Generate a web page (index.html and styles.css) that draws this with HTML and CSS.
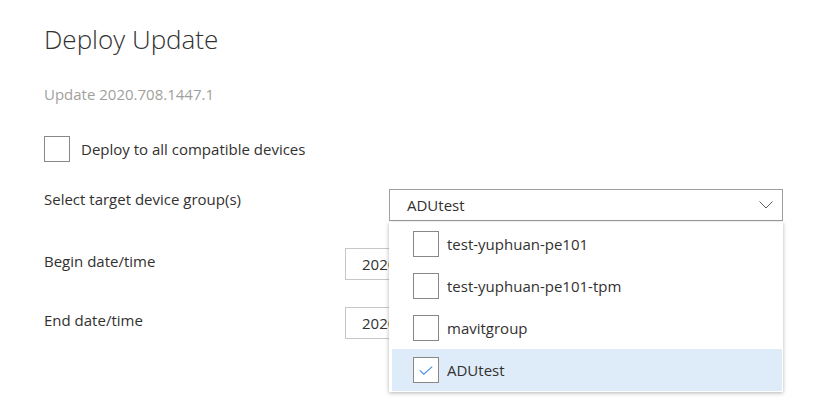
FILE: index.html
```html
<!DOCTYPE html>
<html>
<head>
<meta charset="utf-8">
<link rel="stylesheet" href="styles.css">
</head>
<body>
<div class="page">
  <h1 class="title">Deploy Update</h1>
  <div class="subtitle">Update 2020.708.1447.1</div>
  <label class="check-row">
    <span class="box"></span>
    <span class="check-label">Deploy to all compatible devices</span>
  </label>
  <div class="row row-select">
    <div class="label label-wide">Select target device group(s)</div>
    <div class="select-wrap">
      <div class="select">
        <span>ADUtest</span>
        <svg class="chev" width="14" height="8" viewBox="0 0 14 8"><path d="M0.5 0.5 L7 7 L13.5 0.5" fill="none" stroke="#605e5c" stroke-width="1"/></svg>
      </div>
      <div class="menu">
        <div class="opt"><span class="box"></span><span>test-yuphuan-pe101</span></div>
        <div class="opt"><span class="box"></span><span>test-yuphuan-pe101-tpm</span></div>
        <div class="opt"><span class="box"></span><span>mavitgroup</span></div>
        <div class="opt sel"><span class="box"><svg width="14" height="9" viewBox="0 0 14 9"><path d="M0.8 4.3 L4.8 8.2 L13.2 0.6" fill="none" stroke="#4a8fe0" stroke-width="1.1"/></svg></span><span>ADUtest</span></div>
      </div>
    </div>
  </div>
  <div class="row row-date">
    <div class="label">Begin date/time</div>
    <div class="date">2020-07-08</div>
  </div>
  <div class="row row-date">
    <div class="label">End date/time</div>
    <div class="date">2020-07-08</div>
  </div>
</div>
</body>
</html>
```
FILE: styles.css
```css
* { box-sizing: border-box; }
html, body { margin: 0; background: #fff; }
body { font-family: "Open Sans", "Noto Sans", sans-serif; color: #323130; width: 814px; height: 407px; overflow: hidden; }
.page { padding: 21px 0 0 44px; }
.title { margin: 0; font-weight: 300; font-size: 26px; line-height: 36px; color: #323130; }
.subtitle { margin-top: 27px; font-size: 15px; line-height: 20px; color: #a19f9d; }
.check-row { display: flex; align-items: center; gap: 11px; margin-top: 32px; height: 26px; }
.box { width: 26px; height: 26px; border: 1px solid #8a8886; background: #fff; display: flex; align-items: center; justify-content: center; flex: none; }
.check-label { font-size: 15px; }
.row { display: flex; align-items: center; font-size: 15px; position: relative; }
.label { width: 301px; flex: none; align-self: flex-start; line-height: 20px; padding-top: 3px; }
.label-wide { width: 345px; padding-top: 0; }
.row-select { margin-top: 27px; height: 32px; }
.select-wrap { position: relative; width: 394px; }
.select { height: 32px; border: 1px solid #a19f9d; display: flex; align-items: center; justify-content: space-between; padding: 0 9px 0 17px; }
.chev { display: block; }
.menu { position: absolute; left: 0; top: 33px; width: 394px; background: #fff; box-shadow: 0 1px 4px rgba(0,0,0,0.3); padding: 1px 1px 1px 3px; z-index: 2; }
.opt { display: flex; align-items: center; gap: 8px; height: 42px; padding-left: 21px; font-size: 15px; }
.opt.sel { background: #deecf9; }
.row-date { margin-top: 27px; height: 32px; }
.date { width: 340px; height: 32px; border: 1px solid #c8c6c4; padding: 0 16px; display: flex; align-items: center; }
```
